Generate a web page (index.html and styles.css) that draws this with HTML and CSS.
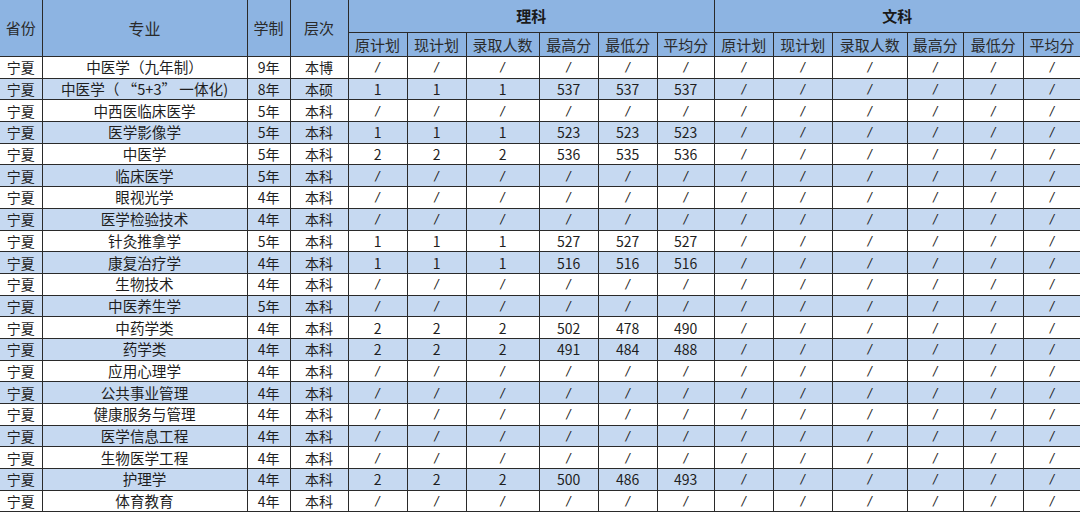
FILE: index.html
```html
<!DOCTYPE html>
<html lang="zh">
<head>
<meta charset="utf-8">
<link rel="stylesheet" href="styles.css">
</head>
<body>
<table class="sheet">
  <colgroup>
    <col style="width:42px"><col style="width:205px"><col style="width:43px"><col style="width:58px">
    <col style="width:59px"><col style="width:59px"><col style="width:73px"><col style="width:59px"><col style="width:59px"><col style="width:57px">
    <col style="width:59px"><col style="width:59px"><col style="width:75px"><col style="width:56px"><col style="width:60px"><col style="width:57px">
  </colgroup>
  <thead>
    <tr class="h1">
      <th rowspan="2">省份</th><th rowspan="2" class="big">专业</th><th rowspan="2">学制</th><th rowspan="2">层次</th>
      <th colspan="6" class="group">理科</th><th colspan="6" class="group">文科</th>
    </tr>
    <tr class="h2">
      <th>原计划</th><th>现计划</th><th>录取人数</th><th>最高分</th><th>最低分</th><th>平均分</th>
      <th>原计划</th><th>现计划</th><th>录取人数</th><th>最高分</th><th>最低分</th><th>平均分</th>
    </tr>
  </thead>
  <tbody id="rows"></tbody>
</table>
<script src="app.js"></script>
</body>
</html>
```
FILE: styles.css
```css
html, body {
  margin: 0;
  padding: 0;
  background: #ffffff;
  overflow: hidden;
}
body {
  font-family: "Noto Sans CJK SC", "Noto Sans", sans-serif;
  color: #1e1e1e;
}
.sheet {
  border-collapse: collapse;
  table-layout: fixed;
  width: 1081px;
  margin-top: -1px;
}
.sheet th, .sheet td {
  border: 1px solid #2a2a2a;
  padding: 0;
  text-align: center;
  white-space: nowrap;
  overflow: hidden;
  font-size: 14px;
  line-height: 18px;
}
.sheet th:first-child, .sheet td:first-child {
  border-left: none;
}
.sheet th {
  background: #8db4e2;
  font-weight: normal;
  font-size: 15px;
  color: #2a2a2a;
}
.sheet th.big { font-size: 16px; }
.sheet .h1 { height: 33px; }
.sheet .h2 { height: 24px; }
.sheet .h2 th { font-size: 15px; }
.sheet th.group {
  font-weight: bold;
  color: #1a1a1a;
}
.sheet tbody tr { height: 21.7px; }
.sheet tbody tr:nth-child(even) td { background: #c6d9f1; }
.sheet td.major { font-size: 14.6px; }
.sheet td.slash {
  font-family: "DejaVu Sans", sans-serif;
  font-style: italic;
  font-size: 12px;
}
```
FILE: app.js
```javascript
const data = [
  ["中医学（九年制）","9年","本博"],
  ["中医学（ “5+3” 一体化)","8年","本硕",[1,1,1,537,537,537]],
  ["中西医临床医学","5年","本科"],
  ["医学影像学","5年","本科",[1,1,1,523,523,523]],
  ["中医学","5年","本科",[2,2,2,536,535,536]],
  ["临床医学","5年","本科"],
  ["眼视光学","4年","本科"],
  ["医学检验技术","4年","本科"],
  ["针灸推拿学","5年","本科",[1,1,1,527,527,527]],
  ["康复治疗学","4年","本科",[1,1,1,516,516,516]],
  ["生物技术","4年","本科"],
  ["中医养生学","5年","本科"],
  ["中药学类","4年","本科",[2,2,2,502,478,490]],
  ["药学类","4年","本科",[2,2,2,491,484,488]],
  ["应用心理学","4年","本科"],
  ["公共事业管理","4年","本科"],
  ["健康服务与管理","4年","本科"],
  ["医学信息工程","4年","本科"],
  ["生物医学工程","4年","本科"],
  ["护理学","4年","本科",[2,2,2,500,486,493]],
  ["体育教育","4年","本科"]
];
const tbody = document.getElementById("rows");
for (const r of data) {
  const tr = document.createElement("tr");
  const cells = ["宁夏", r[0], r[1], r[2]];
  cells.forEach((c, idx) => {
    const td = document.createElement("td");
    td.textContent = c;
    if (idx === 1) td.className = "major";
    tr.appendChild(td);
  });
  const li = r[3] || [null,null,null,null,null,null];
  for (let i = 0; i < 12; i++) {
    const td = document.createElement("td");
    const v = i < 6 ? li[i] : null;
    if (v === null || v === undefined) {
      td.textContent = "/";
      td.className = "slash";
    } else {
      td.textContent = String(v);
    }
    tr.appendChild(td);
  }
  tbody.appendChild(tr);
}
```
